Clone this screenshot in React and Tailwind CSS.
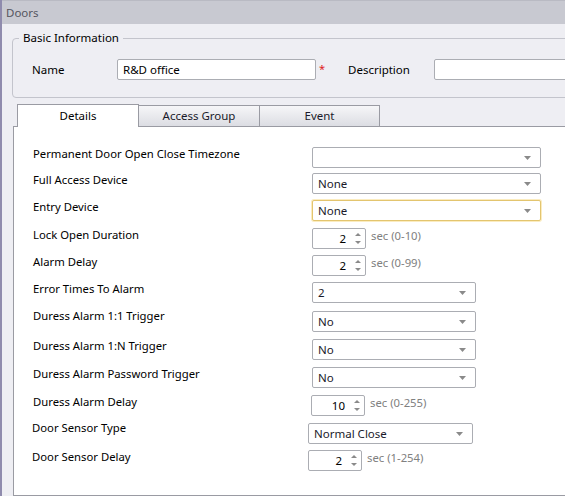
import React from "react";

const FONT = { fontFamily: '"Noto Sans", "Open Sans", sans-serif' };

function Arrow() {
  return (
    <svg width="7" height="4" viewBox="0 0 7 4" className="shrink-0">
      <path d="M0 0 L7 0 L3.5 4 Z" fill="#8a8a8a" />
    </svg>
  );
}

function Combo({ value, w, focused }) {
  return (
    <div
      className={
        focused
          ? "h-[21px] flex items-center justify-between bg-white border border-[#e3c56f] rounded-[2px] shadow-[0_0_0_1px_#fbecc0] pl-[5px] pr-[9px]"
          : "h-[21px] flex items-center justify-between bg-white border border-[#abadb3] rounded-[2px] pl-[5px] pr-[9px]"
      }
      style={{ width: w }}
    >
      <span className="text-[11.5px] text-[#1a1a2a] leading-none">{value}</span>
      <Arrow />
    </div>
  );
}

function Spinner({ value }) {
  return (
    <div className="w-[54px] h-[21px] flex items-center bg-white border border-[#abadb3] rounded-[2px]">
      <span className="flex-1 text-right text-[11.5px] text-black pr-[7px] leading-none">{value}</span>
      <div className="w-[12px] h-full flex flex-col items-center justify-center gap-[5px] pr-[3px]">
        <svg width="6" height="3" viewBox="0 0 6 3"><path d="M0 3 L6 3 L3 0 Z" fill="#8a8a8a" /></svg>
        <svg width="6" height="3" viewBox="0 0 6 3"><path d="M0 0 L6 0 L3 3 Z" fill="#8a8a8a" /></svg>
      </div>
    </div>
  );
}

const rows = [
  { label: "Permanent Door Open Close Timezone", kind: "combo", value: "", w: 229, mt: "mt-[20px]" },
  { label: "Full Access Device", kind: "combo", value: "None", w: 229, mt: "mt-[5px]" },
  { label: "Entry Device", kind: "combo", value: "None", w: 229, mt: "mt-[6px]", focused: true },
  { label: "Lock Open Duration", kind: "spin", value: "2", unit: "sec (0-10)", mt: "mt-[7px]" },
  { label: "Alarm Delay", kind: "spin", value: "2", unit: "sec (0-99)", mt: "mt-[6px]" },
  { label: "Error Times To Alarm", kind: "combo", value: "2", w: 164, mt: "mt-[6px]" },
  { label: "Duress Alarm 1:1 Trigger", kind: "combo", value: "No", w: 164, mt: "mt-[8px]", lmt: "mt-[-3px]" },
  { label: "Duress Alarm 1:N Trigger", kind: "combo", value: "No", w: 164, mt: "mt-[7px]" },
  { label: "Duress Alarm Password Trigger", kind: "combo", value: "No", w: 164, mt: "mt-[7px]" },
  { label: "Duress Alarm Delay", kind: "spin", value: "10", unit: "sec (0-255)", mt: "mt-[7px]", cl: "ml-[-1px]" },
  { label: "Door Sensor Type", kind: "combo", value: "Normal Close", w: 165, mt: "mt-[7px]", lmt: "mt-[-3px]", ll: "ml-[-1px]", cl: "ml-[-3px]" },
  { label: "Door Sensor Delay", kind: "spin", value: "2", unit: "sec (1-254)", mt: "mt-[6px]", ll: "ml-[-1px]", cl: "ml-[-3px]" },
];

export default function App() {
  return (
    <div
      className="w-[565px] h-[496px] overflow-hidden bg-[#eeeef3] border-l-2 border-[#8f8bad] flex flex-col"
      style={FONT}
    >
      {/* header */}
      <div className="h-[24px] shrink-0 bg-[#c8c9d1] border-t border-[#b9bac3] flex items-center pl-[4px]">
        <span className="text-[11.5px] text-[#555560]">Doors</span>
      </div>

      {/* Basic information */}
      <fieldset className="ml-[10px] mt-[6px] w-[580px] h-[68px] shrink-0 border border-[#c3c4cc] rounded-[4px] px-0">
        <legend className="ml-[6px] px-[4px] text-[11.5px] text-black leading-[16px]">Basic Information</legend>
        <div className="flex items-center mt-[13px]">
          <span className="ml-[19px] w-[85px] text-[11.5px] text-black">Name</span>
          <div className="w-[199px] h-[21px] bg-white border border-[#abadb3] rounded-[2px] flex items-center pl-[5px]">
            <span className="text-[11.5px] text-black leading-none">R&amp;D office</span>
          </div>
          <span className="ml-[3px] w-[29px] self-start text-[11px] text-[#e02020] leading-none mt-[4px]">*</span>
          <span className="w-[86px] text-[11.5px] text-black">Description</span>
          <div className="w-[160px] h-[21px] bg-white border border-[#abadb3] rounded-[2px]" />
        </div>
      </fieldset>

      {/* tabs */}
      <div className="flex items-end ml-[13px] mt-[5px] h-[23px] shrink-0">
        <div className="ml-[2px] w-[122px] h-[23px] bg-white border border-b-0 border-[#9a9ba3] flex justify-center pt-[3px] relative z-10 mb-[-1px]">
          <span className="text-[11.5px] text-black leading-[16px]">Details</span>
        </div>
        <div className="w-[121px] h-[21px] bg-gradient-to-b from-[#f6f6f8] to-[#dcdde3] border border-b-0 border-l-0 border-[#9a9ba3] flex justify-center pt-[2px]">
          <span className="text-[11.5px] text-[#1a1a2a] leading-[16px]">Access Group</span>
        </div>
        <div className="w-[120px] h-[21px] bg-gradient-to-b from-[#f6f6f8] to-[#dcdde3] border border-b-0 border-l-0 border-[#9a9ba3] flex justify-center pt-[2px]">
          <span className="text-[11.5px] text-[#1a1a2a] leading-[16px]">Event</span>
        </div>
      </div>

      {/* content panel */}
      <div className="ml-[11px] w-[580px] h-[370px] shrink-0 bg-white border border-[#9a9ba3] flex flex-col">
        {rows.map((r) => (
          <div key={r.label} className={"flex items-start h-[21px] " + r.mt}>
            <div className={"w-[298px] pl-[19px] shrink-0 " + (r.ll || "")}>
              <span className={"block text-[11.3px] text-black leading-[16px] " + (r.lmt || "mt-[-1px]")}>{r.label}</span>
            </div>
            <div className={"flex items-start " + (r.cl || "")}>
              {r.kind === "combo" ? (
                <Combo value={r.value} w={r.w} focused={r.focused} />
              ) : (
                <>
                  <Spinner value={r.value} />
                  <span className="ml-[5px] text-[11.3px] text-[#808080] leading-[16px]">{r.unit}</span>
                </>
              )}
            </div>
          </div>
        ))}
      </div>
    </div>
  );
}
